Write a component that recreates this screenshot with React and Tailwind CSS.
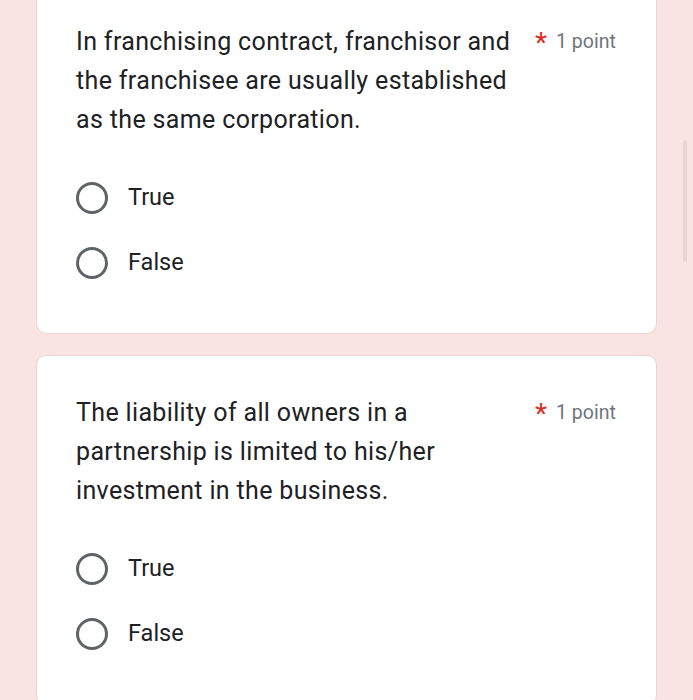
import {useState} from "react";

const questions = [
    {id: 1, text: "In franchising contract, franchisor and the franchisee are usually established as the same corporation.", first: true},
    {id: 2, text: "The liability of all owners in a partnership is limited to his/her investment in the business.", first: false},
];

function Question(props) {
    const [picked, setPicked] = useState("");
    const q = props.question;

    return (
        <div
            className={
                q.first
                    ? "bg-white rounded-b-[10px] border border-t-0 border-[#e8d6d6] pt-[22px] pb-[38px] pl-[39px] pr-[39px]"
                    : "bg-white rounded-[10px] border border-[#e8d6d6] pt-[37px] pb-[38px] pl-[39px] pr-[39px] mt-[21px]"
            }
        >
            <div className="flex items-start">
                <div className="w-[444px] text-[25px] tracking-[0.35px] leading-[39px] text-[#202124]">{q.text}</div>
                <div className="flex items-center ml-[15px] h-[39px]">
                    <span className="text-[#d93025] text-[28px] leading-none mt-[2px]">*</span>
                    <span className="ml-[9px] text-[19.5px] text-[#70757a]">1 point</span>
                </div>
            </div>

            {/* options */}
            <div className="mt-[26px]">
                {["True", "False"].map((opt) => (
                    <label key={opt} className="flex items-center h-[65px] cursor-pointer">
                        <input
                            type="radio"
                            name={"q" + q.id}
                            checked={picked === opt}
                            onChange={() => setPicked(opt)}
                            className="sr-only"
                        />
                        <span className="w-[32px] h-[32px] rounded-full border-[3px] border-[#5f6368] flex items-center justify-center">
                            {picked === opt && <span className="w-[14px] h-[14px] rounded-full bg-[#5f6368]" />}
                        </span>
                        <span className="ml-[20px] text-[23.5px] text-[#202124]">{opt}</span>
                    </label>
                ))}
            </div>
        </div>
    );
}

export default function App() {
    return (
        <div className="relative min-h-[700px] bg-[#fae3e3] pl-[36px] pr-[36px] pb-[40px] font-['Roboto','Liberation_Sans',sans-serif]">
            {questions.map((q) => (
                <Question key={q.id} question={q} />
            ))}
            {/* scrollbar thumb */}
            <div className="absolute left-[683px] top-[140px] w-[4px] h-[122px] rounded-full bg-[#ebd4d4]" />
        </div>
    );
}
